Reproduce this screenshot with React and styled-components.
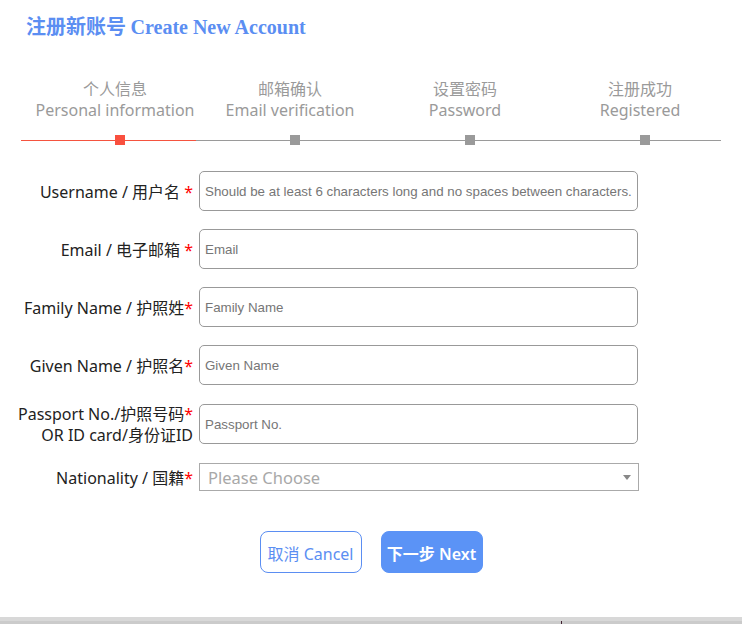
import React from "react";
import styled, { createGlobalStyle } from "styled-components";

const Global = createGlobalStyle`
  html, body { margin: 0; padding: 0; background: #fff; }
  body { font-family: "Noto Sans", "Noto Sans CJK SC", sans-serif; }
  * { box-sizing: border-box; }
  input::placeholder { color: #767676; opacity: 1; }
`;

const Page = styled.div`
  width: 742px;
  height: 624px;
  display: flex;
  flex-direction: column;
  overflow: hidden;
  position: relative;
`;

const Title = styled.h1`
  margin: 0;
  padding: 14px 0 0 26px;
  height: 38px;
  font-size: 20px;
  line-height: 24px;
  font-weight: bold;
  color: #5b8ef2;
  font-family: "Noto Sans CJK SC", sans-serif;
  white-space: nowrap;
  span { font-family: "Liberation Serif", serif; }
`;

const Steps = styled.div`
  margin: 40px 0 0 21px;
  width: 700px;
  display: grid;
  grid-template-columns: repeat(4, 1fr);
`;

const Step = styled.div`
  display: flex;
  flex-direction: column;
`;

const StepLine = styled.div`
  height: 21px;
  padding-left: 13px;
  text-align: center;
  font-size: 16px;
  line-height: 23px;
  color: #9a9a9a;
  white-space: nowrap;
`;

const Segment = styled.div`
  margin-top: 20px;
  height: 1px;
  border-top: 1px solid ${(p) => (p.$active ? "#f5533f" : "#9a9a9a")};
  position: relative;
`;

const Dot = styled.div`
  position: absolute;
  left: 94px;
  top: -6px;
  width: 10px;
  height: 10px;
  background: ${(p) => (p.$active ? "#f9503f" : "#9a9a9a")};
`;

const Form = styled.div`
  margin-top: 30px;
  display: flex;
  flex-direction: column;
  gap: 18px;
`;

const Row = styled.div`
  display: flex;
  align-items: center;
`;

const Label = styled.label`
  width: 193px;
  flex: none;
  display: flex;
  flex-direction: column;
  align-items: flex-end;
  font-size: 16px;
  color: #222;
  white-space: nowrap;
`;

const LabelLine = styled.span`
  display: block;
  height: 21px;
  line-height: 23px;
`;

const Star = styled.span`
  color: #f00;
`;

const Input = styled.input`
  margin-left: 6px;
  width: 439px;
  height: 40px;
  border: 1px solid #999;
  border-radius: 5px;
  padding: 0 5px;
  font-family: "Liberation Sans", Arial, sans-serif;
  font-size: 13.33px;
  outline: none;
  background: #fff;
`;

const Select = styled.div`
  margin-left: 6px;
  width: 440px;
  height: 28px;
  border: 1px solid #aaa;
  display: flex;
  align-items: center;
  justify-content: space-between;
  padding: 1px 7px 0 8px;
  font-size: 16.5px;
  color: #a8a8a8;
`;

const Caret = styled.span`
  width: 0;
  height: 0;
  border-left: 4px solid transparent;
  border-right: 4px solid transparent;
  border-top: 5px solid #888;
`;

const Buttons = styled.div`
  margin-top: 40px;
  display: flex;
  justify-content: center;
  gap: 19px;
`;

const Button = styled.button`
  width: 102px;
  height: 42px;
  border-radius: 8px;
  font-family: "Noto Sans", "Noto Sans CJK SC", sans-serif;
  font-size: 16px;
  padding: 1px 0 0;
  cursor: pointer;
  border: 1px solid ${(p) => (p.$primary ? "#5b93f6" : "#5b8ef2")};
  background: ${(p) => (p.$primary ? "#5b93f6" : "#fff")};
  color: ${(p) => (p.$primary ? "#fff" : "#5b8ef2")};
  font-weight: ${(p) => (p.$primary ? 600 : 400)};
`;

const Footer = styled.div`
  position: absolute;
  left: 0;
  right: 0;
  bottom: 0;
  height: 7px;
  background: linear-gradient(#d8d8d8 0 4px, #cbcbcb 4px);
`;

const Mark = styled.div`
  position: absolute;
  left: 561px;
  bottom: 0;
  width: 1px;
  height: 3px;
  background: #402030;
`;

const steps = [
  ["个人信息", "Personal information"],
  ["邮箱确认", "Email verification"],
  ["设置密码", "Password"],
  ["注册成功", "Registered"],
];

const fields = [
  { label: ["Username / 用户名 "], star: 0, ph: "Should be at least 6 characters long and no spaces between characters." },
  { label: ["Email / 电子邮箱 "], star: 0, ph: "Email" },
  { label: ["Family Name / 护照姓"], star: 0, ph: "Family Name" },
  { label: ["Given Name / 护照名"], star: 0, ph: "Given Name" },
  { label: ["Passport No./护照号码", "OR ID card/身份证ID"], star: 0, ph: "Passport No." },
];

export default function App() {
  return (
    <Page>
      <Global />
      <Title>
        注册新账号 <span>Create New Account</span>
      </Title>
      <Steps>
        {steps.map(([zh, en], i) => (
          <Step key={en}>
            <StepLine>{zh}</StepLine>
            <StepLine>{en}</StepLine>
            <Segment $active={i === 0}>
              <Dot $active={i === 0} />
            </Segment>
          </Step>
        ))}
      </Steps>
      <Form>
        {fields.map((f) => (
          <Row key={f.ph}>
            <Label>
              {f.label.map((t, j) => (
                <LabelLine key={t}>
                  {t}
                  {j === f.star && <Star>*</Star>}
                </LabelLine>
              ))}
            </Label>
            <Input placeholder={f.ph} />
          </Row>
        ))}
        <Row>
          <Label>
            <LabelLine>
              Nationality / 国籍<Star>*</Star>
            </LabelLine>
          </Label>
          <Select>
            Please Choose
            <Caret />
          </Select>
        </Row>
      </Form>
      <Buttons>
        <Button>取消 Cancel</Button>
        <Button $primary>下一步 Next</Button>
      </Buttons>
      <Footer />
      <Mark />
    </Page>
  );
}
